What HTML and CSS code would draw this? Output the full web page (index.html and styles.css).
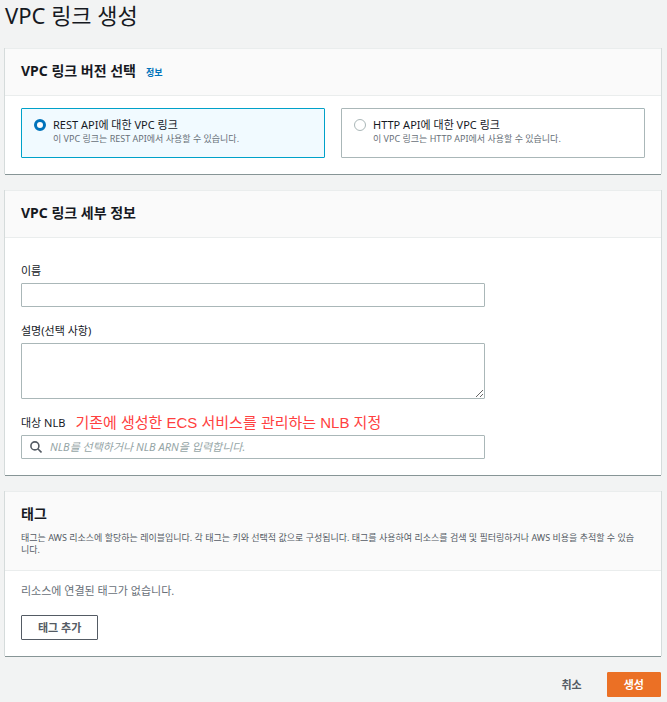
FILE: index.html
```html
<!DOCTYPE html>
<html lang="ko">
<head>
    <meta charset="UTF-8">
    <meta name="viewport" content="width=device-width, initial-scale=1.0">
    <title>VPC 링크 생성</title>
    <link rel="stylesheet" href="styles.css">
</head>
<body>
    <h1>VPC 링크 생성</h1>

    <form>
        <section class="panel">
            <div class="panel-header">
                <h2>VPC 링크 버전 선택</h2>
                <a class="info" href="#">정보</a>
            </div>
            <div class="panel-body tiles">
                <label class="tile">
                    <input type="radio" name="version" value="rest" checked>
                    <span class="tile-text">
                        <span class="tile-title">REST API에 대한 VPC 링크</span>
                        <span class="tile-desc">이 VPC 링크는 REST API에서 사용할 수 있습니다.</span>
                    </span>
                </label>
                <label class="tile">
                    <input type="radio" name="version" value="http">
                    <span class="tile-text">
                        <span class="tile-title">HTTP API에 대한 VPC 링크</span>
                        <span class="tile-desc">이 VPC 링크는 HTTP API에서 사용할 수 있습니다.</span>
                    </span>
                </label>
            </div>
        </section>

        <section class="panel">
            <div class="panel-header">
                <h2>VPC 링크 세부 정보</h2>
            </div>
            <div class="panel-body fields">
                <div class="field">
                    <label for="name">이름</label>
                    <input type="text" id="name">
                </div>
                <div class="field">
                    <label for="description">설명(선택 사항)</label>
                    <textarea id="description"></textarea>
                </div>
                <div class="field">
                    <div class="label-row">
                        <label for="nlb">대상 NLB</label>
                        <span class="note">기존에 생성한 ECS 서비스를 관리하는 NLB 지정</span>
                    </div>
                    <div class="search">
                        <svg width="12" height="12" viewBox="0 0 12 12" fill="none" stroke="#545b64" stroke-width="1.6">
                            <circle cx="4.9" cy="4.9" r="4"/>
                            <path d="M7.8 7.8l3.7 3.7"/>
                        </svg>
                        <input type="text" id="nlb" placeholder="NLB를 선택하거나 NLB ARN을 입력합니다.">
                    </div>
                </div>
            </div>
        </section>

        <section class="panel">
            <div class="panel-header tags-header">
                <h2>태그</h2>
                <p>태그는 AWS 리소스에 할당하는 레이블입니다. 각 태그는 키와 선택적 값으로 구성됩니다. 태그를 사용하여 리소스를 검색 및 필터링하거나 AWS 비용을 추적할 수 있습니다.</p>
            </div>
            <div class="panel-body tags">
                <p>리소스에 연결된 태그가 없습니다.</p>
                <button type="button" class="btn">태그 추가</button>
            </div>
        </section>

        <div class="actions">
            <button type="button" class="btn btn-link">취소</button>
            <button type="submit" class="btn btn-primary">생성</button>
        </div>
    </form>
</body>
</html>
```
FILE: styles.css
```css
* {
    box-sizing: border-box;
}
body {
    margin: 0;
    padding: 0 6px 6px 5px;
    background-color: #f2f3f3;
    color: #16191f;
    font-family: "Noto Sans", "Noto Sans CJK KR", sans-serif;
    font-size: 11px;
    line-height: 16px;
}
h1, h2, p {
    margin: 0;
}
h1 {
    margin-bottom: 18px;
    font-size: 22px;
    font-weight: 400;
    line-height: 30px;
}
h2 {
    font-size: 14px;
    font-weight: 700;
    line-height: 20px;
}
input, textarea, button {
    font-family: inherit;
    font-size: inherit;
}

.panel {
    margin-bottom: 16px;
    border-top: 1px solid #eaeded;
    background-color: #fff;
    box-shadow: 0 1px 0 #879596, 1px 0 0 #d5dbdb, -1px 0 0 #d5dbdb;
}
.panel-header {
    display: flex;
    align-items: baseline;
    gap: 10px;
    padding: 12px 16px 14px;
    border-bottom: 1px solid #eaeded;
    background-color: #fafafa;
}
.info {
    color: #0073bb;
    font-size: 9px;
    font-weight: 700;
    text-decoration: none;
}

.tiles {
    display: grid;
    grid-template-columns: 1fr 1fr;
    gap: 16px;
    padding: 12px 16px 16px;
}
.tile {
    display: flex;
    gap: 7px;
    padding: 9px 12px 12px;
    border: 1px solid #aab7b8;
    border-radius: 1px;
}
.tile:has(input:checked) {
    border-color: #00a1c9;
    background-color: #f1faff;
}
.tile input {
    appearance: none;
    flex: none;
    width: 12px;
    height: 12px;
    margin: 1px 0 0;
    border: 1px solid #aab7b8;
    border-radius: 50%;
    background-color: #fff;
}
.tile input:checked {
    border: 3px solid #0073bb;
}
.tile-text {
    display: flex;
    flex-direction: column;
}
.tile-title {
    line-height: 14px;
}
.tile-desc {
    color: #687078;
    font-size: 9px;
    line-height: 13px;
}

.fields {
    display: flex;
    flex-direction: column;
    gap: 16px;
    padding: 25px 16px 16px;
}
.field {
    display: flex;
    flex-direction: column;
    gap: 4px;
    max-width: 464px;
}
.field input, .field textarea {
    display: block;
    width: 100%;
    height: 24px;
    padding: 0 8px;
    border: 1px solid #aab7b8;
    border-radius: 1px;
    background-color: #fff;
}
.field textarea {
    height: 56px;
    resize: vertical;
}
.label-row {
    display: flex;
    align-items: center;
    gap: 10px;
}
.note {
    color: #ff4040;
    font-family: "Liberation Sans", "Noto Sans CJK KR", sans-serif;
    font-size: 15px;
}
.search {
    position: relative;
}
.search svg {
    position: absolute;
    top: 6px;
    left: 9px;
}
.field .search input {
    padding: 0 8px 2px 28px;
}
.search input::placeholder {
    color: #95a5a6;
    font-style: italic;
}

.tags-header {
    display: block;
}
.tags-header p {
    margin-top: 8px;
    padding-right: 8px;
    color: #545b64;
    font-size: 9px;
    line-height: 12px;
    word-break: break-all;
}
.tags {
    padding: 12px 16px 16px;
}
.tags p {
    margin-bottom: 16px;
    color: #687078;
}

.btn {
    height: 25px;
    padding: 0 16px 2px;
    border: 1px solid #545b64;
    border-radius: 1px;
    background-color: #fff;
    color: #545b64;
    font-weight: 700;
}
.btn-link {
    border-color: transparent;
    background-color: transparent;
}
.btn-primary {
    border-color: #eb7025;
    background-color: #eb7025;
    color: #fff;
}
.actions {
    display: flex;
    justify-content: flex-end;
    gap: 8px;
}
```
